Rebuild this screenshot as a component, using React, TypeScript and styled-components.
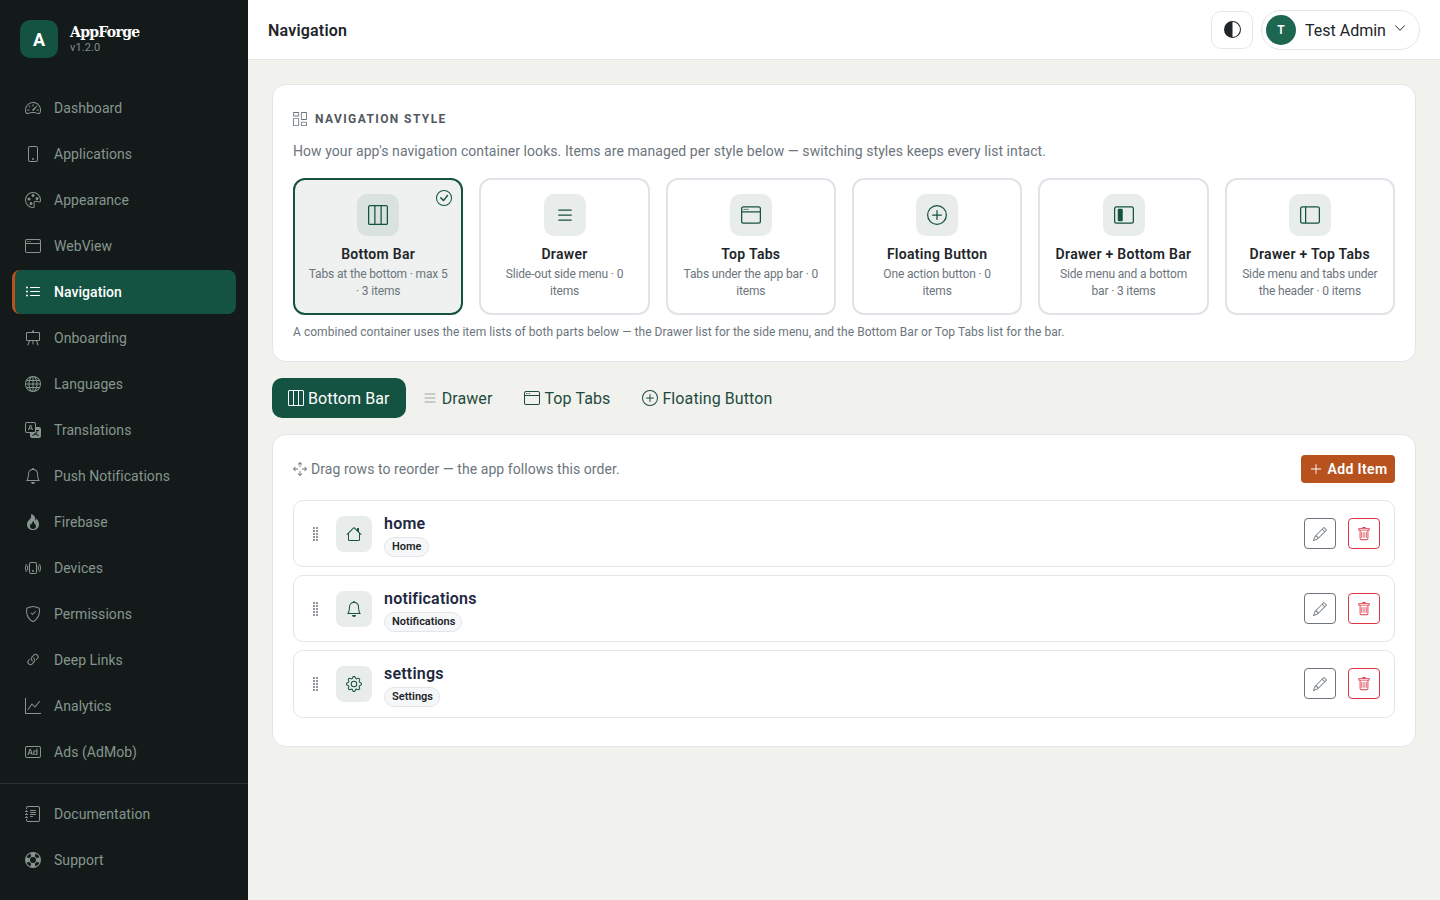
import type { ReactNode } from 'react'
import styled, { createGlobalStyle } from 'styled-components'
import {
  BsArrowsMove,
  BsBadgeAd,
  BsBell,
  BsCheckCircle,
  BsChevronDown,
  BsCircleHalf,
  BsColumnsGap,
  BsEasel,
  BsFire,
  BsGear,
  BsGlobe,
  BsGraphUp,
  BsGripVertical,
  BsHouse,
  BsJournalText,
  BsLayoutSidebar,
  BsLayoutSidebarInset,
  BsLayoutThreeColumns,
  BsLifePreserver,
  BsLink45Deg,
  BsList,
  BsListUl,
  BsPalette,
  BsPencil,
  BsPhone,
  BsPhoneVibrate,
  BsPlusCircle,
  BsPlusLg,
  BsShieldCheck,
  BsSpeedometer2,
  BsTranslate,
  BsTrash,
  BsWindow,
} from 'react-icons/bs'

const FONT = 'Roboto, "Noto Sans", sans-serif'

const GlobalStyle = createGlobalStyle`
  * { box-sizing: border-box; }
  html, body, #root { height: 100%; }
  body {
    margin: 0;
    font-family: ${FONT};
    background: #f1f2ee;
    color: #212529;
  }
`

const Shell = styled.div`
  display: flex;
  height: 900px;
  overflow: hidden;
`

const Sidebar = styled.aside`
  width: 248px;
  flex: none;
  background: #141a1a;
  display: flex;
  flex-direction: column;
`

const Brand = styled.div`
  height: 86px;
  padding: 20px 20px 0;
  display: flex;
  gap: 12px;
`

const Logo = styled.div`
  width: 38px;
  height: 38px;
  border-radius: 10px;
  background: #145241;
  color: #fff;
  font-weight: 700;
  font-size: 18px;
  display: flex;
  align-items: center;
  justify-content: center;
`

const BrandText = styled.div`
  display: flex;
  flex-direction: column;
  padding-top: 3px;
`

const BrandName = styled.div`
  font-family: "DejaVu Serif", "Liberation Serif", serif;
  font-weight: 700;
  font-size: 14px;
  line-height: 18px;
  letter-spacing: -0.7px;
  color: #fff;
`

const BrandVersion = styled.div`
  padding-top: 1px;
  font-size: 11px;
  line-height: 12px;
  letter-spacing: 0.1px;
  color: #7f9088;
`

const NavGroup = styled.nav`
  display: flex;
  flex-direction: column;
  gap: 2px;
  padding: 0 12px;
`

const FootGroup = styled(NavGroup)`
  margin-top: 9px;
  padding-top: 8px;
  border-top: 1px solid #2a3130;
`

const NavItem = styled.a<{ $active?: boolean }>`
  height: 44px;
  display: flex;
  align-items: center;
  gap: 12px;
  padding-left: 9px;
  border-left: 3px solid ${(p) => (p.$active ? '#b7521f' : 'transparent')};
  border-radius: 8px;
  background: ${(p) => (p.$active ? '#145241' : 'transparent')};
  color: ${(p) => (p.$active ? '#ffffff' : '#84968d')};
  font-size: 14px;
  letter-spacing: 0.05px;
  font-weight: ${(p) => (p.$active ? 500 : 400)};
`

const NavIcon = styled.span`
  width: 18px;
  display: flex;
  justify-content: center;
  font-size: 16px;
`

const Main = styled.div`
  flex: 1;
  min-width: 0;
  display: flex;
  flex-direction: column;
`

const Topbar = styled.header`
  height: 60px;
  flex: none;
  background: #fff;
  border-bottom: 1px solid #e3e5e7;
  padding: 0 20px;
  display: flex;
  align-items: center;
  justify-content: space-between;
`

const PageTitle = styled.h1`
  margin: 0;
  padding-top: 1px;
  font-size: 16px;
  font-weight: 600;
  letter-spacing: 0.2px;
`

const TopActions = styled.div`
  display: flex;
  align-items: center;
  gap: 8px;
`

const ThemeButton = styled.button`
  width: 42px;
  height: 38px;
  border: 1px solid #e3e5e7;
  border-radius: 10px;
  background: #fff;
  color: #212529;
  font-size: 17px;
  display: flex;
  align-items: center;
  justify-content: center;
  padding: 0;
`

const UserPill = styled.div`
  width: 159px;
  height: 40px;
  border: 1px solid #e3e5e7;
  border-radius: 20px;
  padding-left: 4px;
  display: flex;
  align-items: center;
  gap: 9px;
  font-size: 16px;
  color: #212529;
`

const UserName = styled.span`
  padding-top: 1px;
`

const Avatar = styled.div`
  width: 30px;
  height: 30px;
  border-radius: 50%;
  background: #1d6650;
  color: #fff;
  font-size: 12px;
  font-weight: 600;
  display: flex;
  align-items: center;
  justify-content: center;
`

const Caret = styled(BsChevronDown)`
  font-size: 12px;
  margin-left: -1px;
  margin-top: -3px;
`

const Content = styled.main`
  flex: 1;
  padding: 24px;
  display: flex;
  flex-direction: column;
  gap: 16px;
`

const Card = styled.section`
  background: #fff;
  border: 1px solid #e3e5e9;
  border-radius: 14px;
  padding: 20px;
`

const SectionHead = styled.div`
  height: 27px;
  display: flex;
  align-items: center;
  gap: 8px;
  font-size: 12px;
  font-weight: 700;
  letter-spacing: 1.4px;
  text-transform: uppercase;
  color: #53585e;
`

const SectionIcon = styled(BsColumnsGap)`
  font-size: 14px;
  color: #6c757d;
`

const Lead = styled.p`
  margin: 9px 0 16px;
  font-size: 14px;
  line-height: 21px;
  letter-spacing: 0.065px;
  color: #6c757d;
`

const StyleGrid = styled.div`
  display: grid;
  grid-template-columns: repeat(6, 1fr);
  gap: 16px;
`

const StyleCard = styled.div<{ $active?: boolean }>`
  position: relative;
  height: 137px;
  border: 2px solid ${(p) => (p.$active ? '#145241' : '#e0e3e7')};
  border-radius: 12px;
  background: ${(p) => (p.$active ? '#eef1ef' : '#fff')};
  padding: 14px 10px 0;
  display: flex;
  flex-direction: column;
  align-items: center;
  text-align: center;
`

const StyleIcon = styled.div<{ $active?: boolean }>`
  width: 42px;
  height: 42px;
  margin-left: 0.2px;
  border-radius: 10px;
  background: ${(p) => (p.$active ? '#d9e2de' : '#e8ecea')};
  color: #145241;
  font-size: 20px;
  display: flex;
  align-items: center;
  justify-content: center;
`

const StyleName = styled.div`
  margin-top: 8px;
  font-size: 14px;
  line-height: 21px;
  font-weight: 600;
  letter-spacing: 0.3px;
  color: #212529;
`

const StyleDesc = styled.div`
  margin-top: 1px;
  font-size: 12px;
  line-height: 17px;
  letter-spacing: -0.15px;
  white-space: pre-line;
  color: #6c757d;
`

const Tick = styled(BsCheckCircle)`
  position: absolute;
  top: 10px;
  right: 9px;
  font-size: 16px;
  color: #145241;
`

const Note = styled.p`
  margin: 8px 0 0;
  height: 18px;
  font-size: 12px;
  line-height: 18px;
  letter-spacing: 0.04px;
  color: #6c757d;
`

const Tabs = styled.div`
  display: flex;
`

const Tab = styled.button<{ $active?: boolean }>`
  height: 40px;
  padding: 0 16px;
  border: 0;
  border-radius: 10px;
  display: flex;
  align-items: center;
  gap: 4px;
  font-family: inherit;
  font-size: 16px;
  letter-spacing: 0.1px;
  background: ${(p) => (p.$active ? '#145241' : 'transparent')};
  color: ${(p) => (p.$active ? '#fff' : '#1f4a3e')};
`

const DimList = styled(BsList)`
  color: #9aa5a0;
`

const ListCard = styled(Card)`
  padding-bottom: 28px;
`

const ListBar = styled.div`
  height: 28px;
  margin-bottom: 17px;
  display: flex;
  align-items: center;
  justify-content: space-between;
`

const Hint = styled.div`
  display: flex;
  align-items: center;
  gap: 4px;
  font-size: 14px;
  letter-spacing: 0.06px;
  color: #6c757d;
`

const AddButton = styled.button`
  width: 94px;
  height: 28px;
  border: 0;
  border-radius: 4px;
  background: #b7521f;
  color: #fff;
  font-family: inherit;
  font-size: 14px;
  font-weight: 600;
  letter-spacing: 0.35px;
  display: flex;
  align-items: center;
  justify-content: center;
  gap: 5px;
  padding: 0;
`

const Rows = styled.div`
  display: flex;
  flex-direction: column;
  gap: 8px;
`

const Row = styled.div`
  height: 67.2px;
  border: 1px solid #e3e5e9;
  border-radius: 10px;
  padding: 0 14px;
  display: flex;
  align-items: center;
`

const Grip = styled(BsGripVertical)`
  width: 16px;
  font-size: 16px;
  color: #6c757d;
`

const RowIcon = styled.div`
  width: 36px;
  height: 36px;
  margin-left: 12px;
  border-radius: 8px;
  background: #e8ecea;
  color: #145241;
  font-size: 16px;
  display: flex;
  align-items: center;
  justify-content: center;
`

const RowText = styled.div`
  flex: 1;
  margin-left: 12px;
  padding-top: 2px;
`

const RowName = styled.div`
  font-size: 16px;
  line-height: 22px;
  font-weight: 600;
  letter-spacing: 0.2px;
  color: #212840;
`

const Badge = styled.span`
  display: inline-block;
  margin-top: 1px;
  padding: 0 6px 0 7px;
  height: 20px;
  line-height: 18px;
  border: 1px solid #e3e5e9;
  border-radius: 10px;
  background: #f6f7f8;
  font-size: 11px;
  font-weight: 600;
  color: #212529;
`

const RowActions = styled.div`
  display: flex;
  gap: 12px;
`

const IconButton = styled.button<{ $danger?: boolean }>`
  width: 32px;
  height: 31px;
  padding: 0;
  border: 1px solid ${(p) => (p.$danger ? '#dc3545' : '#6c757d')};
  border-radius: 4px;
  background: #fff;
  color: ${(p) => (p.$danger ? '#dc3545' : '#6c757d')};
  font-size: 14px;
  display: flex;
  align-items: center;
  justify-content: center;
`

const mainNav: { label: string; icon: ReactNode; active?: boolean }[] = [
  { label: 'Dashboard', icon: <BsSpeedometer2 /> },
  { label: 'Applications', icon: <BsPhone /> },
  { label: 'Appearance', icon: <BsPalette /> },
  { label: 'WebView', icon: <BsWindow /> },
  { label: 'Navigation', icon: <BsListUl />, active: true },
  { label: 'Onboarding', icon: <BsEasel /> },
  { label: 'Languages', icon: <BsGlobe /> },
  { label: 'Translations', icon: <BsTranslate /> },
  { label: 'Push Notifications', icon: <BsBell /> },
  { label: 'Firebase', icon: <BsFire /> },
  { label: 'Devices', icon: <BsPhoneVibrate /> },
  { label: 'Permissions', icon: <BsShieldCheck /> },
  { label: 'Deep Links', icon: <BsLink45Deg /> },
  { label: 'Analytics', icon: <BsGraphUp /> },
  { label: 'Ads (AdMob)', icon: <BsBadgeAd /> },
]

const footNav = [
  { label: 'Documentation', icon: <BsJournalText /> },
  { label: 'Support', icon: <BsLifePreserver /> },
]

// descriptions break where the reference breaks them
const navStyles: { name: string; desc: string; icon: ReactNode; active?: boolean }[] = [
  { name: 'Bottom Bar', desc: 'Tabs at the bottom · max 5\n· 3 items', icon: <BsLayoutThreeColumns />, active: true },
  { name: 'Drawer', desc: 'Slide-out side menu · 0\nitems', icon: <BsList /> },
  { name: 'Top Tabs', desc: 'Tabs under the app bar · 0\nitems', icon: <BsWindow /> },
  { name: 'Floating Button', desc: 'One action button · 0\nitems', icon: <BsPlusCircle /> },
  { name: 'Drawer + Bottom Bar', desc: 'Side menu and a bottom\nbar · 3 items', icon: <BsLayoutSidebarInset /> },
  { name: 'Drawer + Top Tabs', desc: 'Side menu and tabs under\nthe header · 0 items', icon: <BsLayoutSidebar /> },
]

const items = [
  { name: 'home', label: 'Home', icon: <BsHouse /> },
  { name: 'notifications', label: 'Notifications', icon: <BsBell /> },
  { name: 'settings', label: 'Settings', icon: <BsGear /> },
]

export default function App() {
  return (
    <Shell>
      <GlobalStyle />
      <Sidebar>
        <Brand>
          <Logo>A</Logo>
          <BrandText>
            <BrandName>AppForge</BrandName>
            <BrandVersion>v1.2.0</BrandVersion>
          </BrandText>
        </Brand>
        <NavGroup>
          {mainNav.map((n) => (
            <NavItem key={n.label} $active={n.active}>
              <NavIcon>{n.icon}</NavIcon>
              {n.label}
            </NavItem>
          ))}
        </NavGroup>
        <FootGroup>
          {footNav.map((n) => (
            <NavItem key={n.label}>
              <NavIcon>{n.icon}</NavIcon>
              {n.label}
            </NavItem>
          ))}
        </FootGroup>
      </Sidebar>
      <Main>
        <Topbar>
          <PageTitle>Navigation</PageTitle>
          <TopActions>
            <ThemeButton>
              <BsCircleHalf />
            </ThemeButton>
            <UserPill>
              <Avatar>T</Avatar>
              <UserName>Test Admin</UserName>
              <Caret />
            </UserPill>
          </TopActions>
        </Topbar>
        <Content>
          <Card>
            <SectionHead>
              <SectionIcon />
              Navigation Style
            </SectionHead>
            <Lead>
              How your app's navigation container looks. Items are managed per style below — switching styles keeps every list intact.
            </Lead>
            <StyleGrid>
              {navStyles.map((s) => (
                <StyleCard key={s.name} $active={s.active}>
                  {s.active && <Tick />}
                  <StyleIcon $active={s.active}>{s.icon}</StyleIcon>
                  <StyleName>{s.name}</StyleName>
                  <StyleDesc>{s.desc}</StyleDesc>
                </StyleCard>
              ))}
            </StyleGrid>
            <Note>
              A combined container uses the item lists of both parts below — the Drawer list for the side menu, and the Bottom Bar or Top Tabs list for the bar.
            </Note>
          </Card>
          <Tabs>
            <Tab $active>
              <BsLayoutThreeColumns />
              Bottom Bar
            </Tab>
            <Tab>
              <DimList />
              Drawer
            </Tab>
            <Tab>
              <BsWindow />
              Top Tabs
            </Tab>
            <Tab>
              <BsPlusCircle />
              Floating Button
            </Tab>
          </Tabs>
          <ListCard>
            <ListBar>
              <Hint>
                <BsArrowsMove />
                Drag rows to reorder — the app follows this order.
              </Hint>
              <AddButton>
                <BsPlusLg />
                Add Item
              </AddButton>
            </ListBar>
            <Rows>
              {items.map((it) => (
                <Row key={it.name}>
                  <Grip />
                  <RowIcon>{it.icon}</RowIcon>
                  <RowText>
                    <RowName>{it.name}</RowName>
                    <Badge>{it.label}</Badge>
                  </RowText>
                  <RowActions>
                    <IconButton>
                      <BsPencil />
                    </IconButton>
                    <IconButton $danger>
                      <BsTrash />
                    </IconButton>
                  </RowActions>
                </Row>
              ))}
            </Rows>
          </ListCard>
        </Content>
      </Main>
    </Shell>
  )
}
